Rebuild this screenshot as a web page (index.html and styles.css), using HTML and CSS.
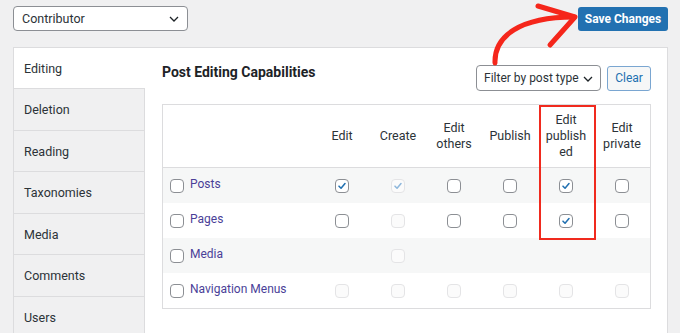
FILE: index.html
```html
<!DOCTYPE html>
<html lang="en">
<head>
<meta charset="utf-8">
<title>Role capabilities</title>
<link rel="stylesheet" href="styles.css">
</head>
<body>
<div class="topbar">
  <div class="select role-select"><span>Contributor</span><svg class="chev" viewBox="0 0 10 6" width="10" height="6"><path d="M1 1l4 4 4-4" fill="none" stroke="#1d2327" stroke-width="1.3"/></svg></div>
  <button class="btn-primary">Save Changes</button>
</div>

<div class="panel">
  <ul class="tabs">
    <li class="tab active">Editing</li>
    <li class="tab">Deletion</li>
    <li class="tab">Reading</li>
    <li class="tab">Taxonomies</li>
    <li class="tab">Media</li>
    <li class="tab">Comments</li>
    <li class="tab">Users</li>
  </ul>
  <div class="content">
    <div class="content-head">
      <h2 class="title">Post Editing Capabilities</h2>
      <div class="filters">
        <div class="select filter-select"><span>Filter by post type</span><svg class="chev" viewBox="0 0 10 6" width="10" height="6"><path d="M1 1l4 4 4-4" fill="none" stroke="#1d2327" stroke-width="1.3"/></svg></div>
        <button class="btn-secondary">Clear</button>
      </div>
    </div>

    <div class="table">
      <div class="row head">
        <div class="cell name"></div>
        <div class="cell">Edit</div>
        <div class="cell">Create</div>
        <div class="cell">Edit<br>others</div>
        <div class="cell">Publish</div>
        <div class="cell">Edit<br>publish<br>ed</div>
        <div class="cell">Edit<br>private</div>
      </div>
      <div class="row alt">
        <div class="cell name"><span class="cb"></span><span class="lbl">Posts</span></div>
        <div class="cell"><span class="cb on"><svg viewBox="0 0 14 14"><path d="M3.5 7.2l2.4 2.4 4.6-5.4" /></svg></span></div>
        <div class="cell"><span class="cb dis on"><svg viewBox="0 0 14 14"><path d="M3.5 7.2l2.4 2.4 4.6-5.4" /></svg></span></div>
        <div class="cell"><span class="cb"></span></div>
        <div class="cell"><span class="cb"></span></div>
        <div class="cell"><span class="cb on"><svg viewBox="0 0 14 14"><path d="M3.5 7.2l2.4 2.4 4.6-5.4" /></svg></span></div>
        <div class="cell"><span class="cb"></span></div>
      </div>
      <div class="row">
        <div class="cell name"><span class="cb"></span><span class="lbl">Pages</span></div>
        <div class="cell"><span class="cb"></span></div>
        <div class="cell"><span class="cb dis"></span></div>
        <div class="cell"><span class="cb"></span></div>
        <div class="cell"><span class="cb"></span></div>
        <div class="cell"><span class="cb on"><svg viewBox="0 0 14 14"><path d="M3.5 7.2l2.4 2.4 4.6-5.4" /></svg></span></div>
        <div class="cell"><span class="cb"></span></div>
      </div>
      <div class="row alt">
        <div class="cell name"><span class="cb"></span><span class="lbl">Media</span></div>
        <div class="cell"></div>
        <div class="cell"><span class="cb dis"></span></div>
        <div class="cell"></div>
        <div class="cell"></div>
        <div class="cell"></div>
        <div class="cell"></div>
      </div>
      <div class="row">
        <div class="cell name"><span class="cb"></span><span class="lbl">Navigation Menus</span></div>
        <div class="cell"><span class="cb dis"></span></div>
        <div class="cell"><span class="cb dis"></span></div>
        <div class="cell"><span class="cb dis"></span></div>
        <div class="cell"><span class="cb dis"></span></div>
        <div class="cell"><span class="cb dis"></span></div>
        <div class="cell"><span class="cb dis"></span></div>
      </div>
      <div class="highlight"></div>
    </div>
  </div>
</div>

<svg class="arrow" viewBox="0 0 120 70" width="120" height="70">
  <path d="M25 63 C24 36 50 17 104 17" fill="none" stroke="#f5261b" stroke-width="5" stroke-linecap="round"/>
  <path d="M68 6 L105 17 L80 45" fill="none" stroke="#f5261b" stroke-width="5" stroke-linecap="round" stroke-linejoin="round"/>
</svg>
</body>
</html>
```

FILE: styles.css
```css
* { box-sizing: border-box; }
html, body { margin: 0; padding: 0; }
body {
  background: #f0f0f1;
  font-family: Roboto, "Liberation Sans", Arial, sans-serif;
  font-size: 12px;
  color: #1d2327;
  position: relative;
  height: 333px;
  overflow: hidden;
}
.topbar {
  display: flex;
  justify-content: space-between;
  align-items: center;
  padding: 6px 12px 0 13px;
  height: 31px;
}
.select {
  display: flex;
  align-items: center;
  justify-content: space-between;
  background: #fff;
  border: 1px solid #8c8f94;
  border-radius: 4px;
  color: #2c3338;
  font-size: 12.5px;
  white-space: nowrap;
}
.role-select {
  width: 175px;
  height: 25px;
  padding: 0 8px 0 8px;
}
.chev { display: block; margin-top: 1px; flex: none; }
.btn-primary {
  width: 90px;
  height: 24px;
  border: 0;
  border-radius: 3px;
  background: #2271b1;
  color: #fff;
  font-family: inherit;
  font-size: 12px;
  font-weight: 700;
  padding: 0;
}
.panel {
  margin: 16px 0 0 13px;
  width: 655px;
  height: 300px;
  background: #fff;
  border: 1px solid #dcdcde;
  display: flex;
}
.tabs {
  list-style: none;
  margin: 0;
  padding: 0;
  width: 131px;
  flex: none;
  background: #f0f0f1;
  border-right: 1px solid #dcdcde;
}
.tab {
  height: 41.5px;
  line-height: 41px;
  padding-left: 10px;
  border-bottom: 1px solid #dcdcde;
  font-size: 12.5px;
  color: #2c3338;
}
.tab.active {
  background: #fff;
  margin-right: -1px;
  height: 41px;
}
.content {
  flex: 1;
  padding: 17px 17px 0 17px;
}
.content-head {
  display: flex;
  justify-content: space-between;
  align-items: center;
  height: 26px;
}
.title {
  margin: 0;
  font-size: 14px;
  font-weight: 700;
  color: #1d2327;
  position: relative;
  top: -6px;
}
.filters { display: flex; gap: 6px; align-items: center; }
.filter-select {
  width: 125px;
  height: 26px;
  padding: 0 7px 0 7px;
  font-size: 12px;
  gap: 4px;
}
.btn-secondary {
  width: 44px;
  height: 25px;
  background: #f6f7f7;
  border: 1px solid #7aa6d1;
  border-radius: 3px;
  color: #2271b1;
  font-family: inherit;
  font-size: 12px;
  padding: 0;
}
.table {
  position: relative;
  margin-top: 13px;
  border: 1px solid #dcdcde;
  width: 489px;
}
.row {
  display: grid;
  grid-template-columns: 151px repeat(6, 56px);
  height: 35px;
}
.row.head {
  height: 63px;
  border-bottom: 1px solid #dcdcde;
}
.row.alt { background: #f6f7f7; }
.cell {
  display: flex;
  align-items: center;
  justify-content: center;
  text-align: center;
  line-height: 16px;
  font-size: 12.5px;
  color: #2c3338;
}
.cell.name {
  justify-content: flex-start;
  padding-left: 7px;
  gap: 6px;
}
.lbl { color: #4a3f98; font-size: 12px; margin-top: -3px; }
.cb {
  width: 14px;
  height: 14px;
  border: 1px solid #8c8f94;
  border-radius: 4px;
  background: #fff;
  display: inline-flex;
  align-items: center;
  justify-content: center;
  flex: none;
}
.cb svg { width: 14px; height: 14px; }
.cb svg path { fill: none; stroke: #2271b1; stroke-width: 1.8; stroke-linecap: round; stroke-linejoin: round; }
.cb.dis { border-color: #e4e4e6; background: #fbfbfb; }
.cb.dis svg path { stroke: #8fb8dc; }
.highlight {
  position: absolute;
  left: 376px;
  top: 0;
  width: 57px;
  height: 135px;
  border: 2px solid #f02a1e;
  pointer-events: none;
}
.arrow {
  position: absolute;
  left: 470px;
  top: 0;
}
```
